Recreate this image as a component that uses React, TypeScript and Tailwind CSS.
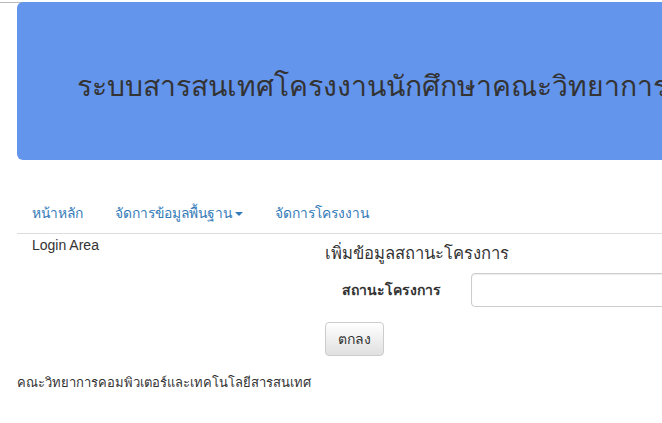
export default function App() {
  const links = [
    { label: "หน้าหลัก", caret: false },
    { label: "จัดการข้อมูลพื้นฐาน", caret: true },
    { label: "จัดการโครงงาน", caret: false },
  ];

  return (
    <div className="w-[662px] h-[423px] overflow-hidden bg-white text-[#333] text-[14px] font-['Liberation_Sans','Noto_Sans','DejaVu_Sans',sans-serif]">
      <div className="w-[1200px]">
        <div className="h-[3px] border-b border-[#bbb]" />
        <div className="ml-[17px] h-[158px] -mt-px rounded-[6px] bg-[#6495ed] pl-[60px] flex items-center">
          <h1 className="text-[28.3px] text-[#333] leading-none pt-[10px]">
            ระบบสารสนเทศโครงงานนักศึกษาคณะวิทยาการคอมพิวเตอร์และเทคโนโลยีสารสนเทศ
          </h1>
        </div>

        <div className="ml-[17px] mt-[31px] border-b border-[#ddd] flex h-[43px] items-center pt-[4px]">
          {links.map((l) => (
            <a
              key={l.label}
              href="#"
              className="px-[15px] mr-[2px] text-[13.8px] text-[#337ab7] flex items-center"
            >
              {l.label}
              {l.caret && (
                <span className="ml-[3px] inline-block w-0 h-0 border-l-[4px] border-r-[4px] border-t-[4px] border-l-transparent border-r-transparent border-t-[#337ab7]" />
              )}
            </a>
          ))}
        </div>

        <div className="ml-[17px] flex">
          <div className="w-[293px] px-[15px] pt-[1px]">Login Area</div>
          <div className="flex-1 px-[15px]">
            <h4 className="text-[16.6px] mt-[9px] leading-[22px]">เพิ่มข้อมูลสถานะโครงการ</h4>
            <div className="flex items-center mt-[8px]">
              <label className="w-[131px] text-right font-bold pr-[15px]">สถานะโครงการ</label>
              <input
                type="text"
                className="ml-[15px] w-[400px] h-[34px] rounded-[4px] border border-[#ccc] shadow-[inset_0_1px_1px_rgba(0,0,0,0.075)] px-3"
              />
            </div>
            <button className="mt-[15px] h-[34px] px-[12px] rounded-[4px] border border-[#ccc] bg-gradient-to-b from-white to-[#e0e0e0] shadow-[0_1px_0_rgba(255,255,255,0.15)]">
              ตกลง
            </button>
          </div>
        </div>

        <div className="ml-[17px] mt-[17px] text-[13px]">
          คณะวิทยาการคอมพิวเตอร์และเทคโนโลยีสารสนเทศ
        </div>
      </div>
    </div>
  );
}
